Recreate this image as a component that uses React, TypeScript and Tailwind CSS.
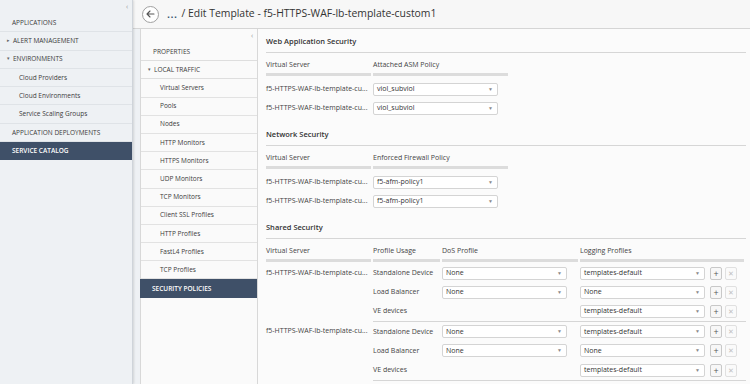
import React from "react";

const F = { fontFamily: '"Open Sans", "Liberation Sans", sans-serif' };

function Select({ value, w = "w-[125px]" }: { value: string; w?: string }) {
  return (
    <div className={`${w} h-[13px] bg-white border border-[#d4d4d4] rounded-[2px] flex items-center justify-between pl-[3px] pr-[4px] text-[7px] text-[#333]`}>
      <span>{value}</span>
      <span className="text-[#8a8a8a] text-[5px] leading-none">▼</span>
    </div>
  );
}

function Btns() {
  return (
    <div className="flex gap-[3px] ml-[5px]">
      <div className="w-[12px] h-[13px] border border-[#c8c8c8] rounded-[2px] bg-[#f7f7f7] flex items-center justify-center text-[9px] leading-none text-[#555]">+</div>
      <div className="w-[12px] h-[13px] border border-[#e0e0e0] rounded-[2px] bg-[#fafafa] flex items-center justify-center text-[7px] leading-none text-[#c0c0c0]">✕</div>
    </div>
  );
}

const VS = "f5-HTTPS-WAF-lb-template-cu...";

function SectionTitle({ t }: { t: string }) {
  return (
    <div className="h-[20px] flex items-end pb-[5px] border-b border-[#d6d6d6] text-[7.5px] font-semibold text-[#333]">{t}</div>
  );
}

function HeadCell({ t, w }: { t: string; w: string }) {
  return (
    <div className={`${w} mr-[2px] h-[21px] flex items-center border-b-[3px] border-[#dcdcdc] text-[7px] text-[#444] pt-[3px]`}>{t}</div>
  );
}

function SimpleSection({ title, col, value }: { title: string; col: string; value: string }) {
  return (
    <div>
      <SectionTitle t={title} />
      <div className="flex pt-[2px]">
        <HeadCell t="Virtual Server" w="w-[105px]" />
        <HeadCell t={col} w="w-[135px]" />
      </div>
      <div className="pt-[4px]">
        {[0, 1].map((i) => (
          <div key={i} className="flex items-center h-[19px]">
            <div className="w-[107px] text-[7px] text-[#444] whitespace-nowrap">{VS}</div>
            <Select value={value} />
          </div>
        ))}
      </div>
    </div>
  );
}

function SharedGroup() {
  const rows = [
    { u: "Standalone Device", d: "None", l: "templates-default" },
    { u: "Load Balancer", d: "None", l: "None" },
    { u: "VE devices", d: null as string | null, l: "templates-default" },
  ];
  return (
    <div className="flex">
      <div className="w-[107px] text-[7px] text-[#444] whitespace-nowrap pt-[4px]">{VS}</div>
      <div className="flex-1 border-b border-[#d6d6d6]">
        {rows.map((r, i) => (
          <div key={i} className="flex items-center h-[19.1px]">
            <div className="w-[69px] text-[7px] text-[#444]">{r.u}</div>
            <div className="w-[138px]">{r.d && <Select value={r.d} />}</div>
            <Select value={r.l} />
            <Btns />
          </div>
        ))}
      </div>
    </div>
  );
}

export default function App() {
  const left = [
    { t: "APPLICATIONS", k: "top" },
    { t: "ALERT MANAGEMENT", k: "top", a: "▸" },
    { t: "ENVIRONMENTS", k: "top", a: "▾" },
    { t: "Cloud Providers", k: "sub" },
    { t: "Cloud Environments", k: "sub" },
    { t: "Service Scaling Groups", k: "sub" },
    { t: "APPLICATION DEPLOYMENTS", k: "top" },
    { t: "SERVICE CATALOG", k: "sel" },
  ];
  const mid = [
    "Virtual Servers",
    "Pools",
    "Nodes",
    "HTTP Monitors",
    "HTTPS Monitors",
    "UDP Monitors",
    "TCP Monitors",
    "Client SSL Profiles",
    "HTTP Profiles",
    "FastL4 Profiles",
    "TCP Profiles",
  ];
  return (
    <div style={F} className="w-[750px] h-[384px] flex overflow-hidden bg-[#eef1f4]">
      {/* Left sidebar */}
      <div className="w-[133px] shrink-0 bg-[#eef1f4] border-r border-[#cfd4da] shadow-[1px_0_2px_rgba(0,0,0,0.12)] relative">
        <div className="h-[14px] relative">
          <span className="absolute right-[4px] top-[2px] text-[7px] text-[#999]">‹</span>
        </div>
        {left.map((r, i) => (
          <div
            key={i}
            className={
              r.k === "sel"
                ? "h-[18.3px] flex items-center bg-[#3f5068] text-white text-[6.5px] font-semibold pl-[12px] border-b border-[#3f5068]"
                : r.k === "sub"
                ? "h-[18.3px] flex items-center text-[6.5px] text-[#3b3b3b] pl-[19px] border-b border-[#dfe3e7]"
                : "h-[18.3px] flex items-center text-[6.5px] text-[#3b3b3b] pl-[12px] border-b border-[#dfe3e7]"
            }
          >
            {r.a && <span className="text-[5px] text-[#666] mr-[3px] -ml-[5px]">{r.a}</span>}
            {r.t}
          </div>
        ))}
      </div>

      {/* Right area */}
      <div className="flex-1 flex flex-col">
        {/* Header */}
        <div className="h-[29px] bg-[#f7f7f7] border-b border-[#d5d5d5] flex items-center pl-[9px] shrink-0">
          <div className="w-[17px] h-[17px] rounded-full border border-[#a0a0a0] bg-white flex items-center justify-center">
            <svg width="9" height="8" viewBox="0 0 9 8" fill="none" stroke="#555" strokeWidth="1.1" strokeLinecap="round" strokeLinejoin="round">
              <path d="M8 4H1.2M4 1L1 4l3 3" />
            </svg>
          </div>
          <span className="ml-[8px] text-[11px] text-[#2f4a6b] font-semibold tracking-[0.5px]">...</span>
          <span className="ml-[4px] text-[10.4px] text-[#333]">/ Edit Template - f5-HTTPS-WAF-lb-template-custom1</span>
        </div>
        <div className="flex-1 flex">
          {/* Middle nav */}
          <div className="w-[125px] shrink-0 bg-[#eef1f4] pl-[7px]">
            <div className="h-full bg-[#fafafa] border-l border-r border-[#d8d8d8] relative">
              <span className="absolute right-[4px] top-[2px] text-[7px] text-[#999]">‹</span>
              <div className="h-[14px]" />
              <div className="h-[18.2px] flex items-center pl-[12px] text-[6.5px] text-[#3b3b3b] border-b border-[#dedede]">PROPERTIES</div>
              <div className="h-[18.2px] flex items-center pl-[7px] text-[6.5px] text-[#3b3b3b] border-b border-[#dedede]">
                <span className="text-[5px] text-[#666] mr-[3px]">▾</span>LOCAL TRAFFIC
              </div>
              {mid.map((m) => (
                <div key={m} className="h-[18.2px] flex items-center pl-[19px] text-[6.5px] text-[#3b3b3b] border-b border-[#e2e2e2]">
                  {m}
                </div>
              ))}
              <div className="h-[18.2px] flex items-center pl-[12px] text-[6.5px] font-semibold text-white bg-[#3f5068] -ml-px">SECURITY POLICIES</div>
            </div>
          </div>
          {/* Main */}
          <div className="flex-1 bg-[#fbfbfb] pl-[8px] pr-[6px] pt-[4px]">
            <SimpleSection title="Web Application Security" col="Attached ASM Policy" value="viol_subviol" />
            <div className="h-[8px]" />
            <SimpleSection title="Network Security" col="Enforced Firewall Policy" value="f5-afm-policy1" />
            <div className="h-[8px]" />
            <SectionTitle t="Shared Security" />
            <div className="flex pt-[2px]">
              <HeadCell t="Virtual Server" w="w-[105px]" />
              <HeadCell t="Profile Usage" w="w-[67px]" />
              <HeadCell t="DoS Profile" w="w-[136px]" />
              <HeadCell t="Logging Profiles" w="w-[164px]" />
            </div>
            <div className="pt-[2px]">
              <SharedGroup />
              <SharedGroup />
            </div>
          </div>
        </div>
      </div>
    </div>
  );
}
